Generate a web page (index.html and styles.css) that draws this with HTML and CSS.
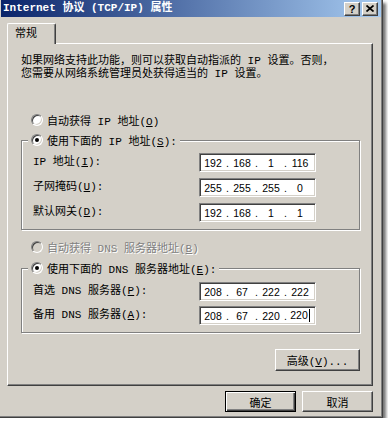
FILE: index.html
```html
<!DOCTYPE html>
<html lang="zh-CN">
<head>
<meta charset="utf-8">
<title>Internet 协议 (TCP/IP) 属性</title>
<link rel="stylesheet" href="styles.css">
</head>
<body>
<div class="dialog">
  <div class="titlebar">
    <span class="title">Internet 协议 (TCP/IP) 属性</span>
    <div class="tbtns">
      <span class="tbtn help">?</span>
      <span class="tbtn close"><svg width="8" height="7" viewBox="0 0 8 7"><path d="M0.5 0.5L7.5 6.5M7.5 0.5L0.5 6.5" stroke="#000" stroke-width="1.7" fill="none"/></svg></span>
    </div>
  </div>
  <div class="tabs"><div class="tab">常规</div></div>
  <div class="panel">
    <p class="intro">如果网络支持此功能，则可以获取自动指派的 IP 设置。否则，<br>您需要从网络系统管理员处获得适当的 IP 设置。</p>
    <div class="opt opt-first"><span class="radio"></span><span>自动获得 IP 地址(<u>O</u>)</span></div>
    <div class="group group-ip">
      <div class="opt legend"><span class="radio on"></span><span>使用下面的 IP 地址(<u>S</u>):</span></div>
      <div class="fields">
        <label>IP 地址(<u>I</u>):</label>
        <div class="ip"><span>192</span><i>.</i><span>168</span><i>.</i><span>1</span><i>.</i><span>116</span></div>
        <label>子网掩码(<u>U</u>):</label>
        <div class="ip"><span>255</span><i>.</i><span>255</span><i>.</i><span>255</span><i>.</i><span>0</span></div>
        <label>默认网关(<u>D</u>):</label>
        <div class="ip"><span>192</span><i>.</i><span>168</span><i>.</i><span>1</span><i>.</i><span>1</span></div>
      </div>
    </div>
    <div class="opt opt-dis"><span class="radio dis"></span><span>自动获得 DNS 服务器地址(<u>B</u>)</span></div>
    <div class="group group-dns">
      <div class="opt legend"><span class="radio on"></span><span>使用下面的 DNS 服务器地址(<u>E</u>):</span></div>
      <div class="fields fields-dns">
        <label>首选 DNS 服务器(<u>P</u>):</label>
        <div class="ip"><span>208</span><i>.</i><span>67</span><i>.</i><span>222</span><i>.</i><span>222</span></div>
        <label>备用 DNS 服务器(<u>A</u>):</label>
        <div class="ip"><span>208</span><i>.</i><span>67</span><i>.</i><span>220</span><i>.</i><span>220<b class="caret"></b></span></div>
      </div>
    </div>
    <div class="adv-row"><button class="btn adv">高级(<u>V</u>)...</button></div>
  </div>
  <div class="footer">
    <button class="btn default">确定</button>
    <button class="btn">取消</button>
  </div>
</div>
</body>
</html>
```
FILE: styles.css
```css
* { box-sizing: border-box; margin: 0; padding: 0; }
body {
  background: #fff;
  font-family: "Liberation Mono", "Noto Sans CJK SC", monospace;
  font-size: 11px;
  color: #000;
}
.dialog {
  width: 383px;
  height: 418px;
  background: #d4d0c8;
  border-right: 1px solid #404040;
  border-bottom: 1px solid #404040;
  padding: 0 1px 0 1px;
  box-shadow: inset -1px -1px #808080, 3px 3px 3px rgba(0,0,0,.55);
  display: flex;
  flex-direction: column;
}
.titlebar {
  height: 17px;
  background: linear-gradient(to right, #0a246a, #a6caf0);
  color: #fff;
  font-weight: bold;
  display: flex;
  align-items: center;
  justify-content: space-between;
  padding-left: 2px;
  flex: none;
}
.title { line-height: 17px; white-space: nowrap; }
.tbtns { display: flex; gap: 2px; margin-right: 3px; }
.tbtn {
  width: 16px;
  height: 14px;
  background: #d4d0c8;
  border: 1px solid;
  border-color: #fff #404040 #404040 #fff;
  box-shadow: inset -1px -1px #808080;
  display: flex;
  align-items: center;
  justify-content: center;
  color: #000;
}
.help { font-family: "Liberation Sans", sans-serif; font-size: 11px; font-weight: bold; line-height: 12px; }
.tabs { margin: 6px 0 0 6px; display: flex; flex: none; }
.tab {
  width: 49px;
  height: 21px;
  border: 1px solid;
  border-color: #fff #404040 transparent #fff;
  border-bottom: none;
  border-radius: 2px 2px 0 0;
  box-shadow: inset -1px 0 #808080;
  background: #d4d0c8;
  position: relative;
  z-index: 1;
  margin-bottom: -1px;
  padding: 4px 0 0 7px;
  line-height: 13px;
  font-weight: normal;
}
.panel {
  margin-left: 6px;
  width: 366px;
  height: 343px;
  flex: none;
  border: 1px solid;
  border-color: #fff #404040 #404040 #fff;
  box-shadow: inset -1px -1px #808080;
  padding: 0 12px 0 13px;
}
.intro { margin-top: 11px; line-height: 13px; white-space: nowrap; }
.opt { display: flex; align-items: center; height: 16px; gap: 4px; white-space: nowrap; }
.opt-first { margin-top: 31px; margin-left: 10px; }
.opt-dis { margin-top: 9px; margin-left: 10px; color: #808080; text-shadow: 1px 1px #fff; }
.radio {
  width: 12px;
  height: 12px;
  flex: none;
  border-radius: 50%;
  border: 1px solid;
  border-color: #808080 #fff #fff #808080;
  background: #fff;
  box-shadow: inset 1px 1px #404040, inset -1px -1px #d4d0c8;
  display: flex;
  align-items: center;
  justify-content: center;
}
.radio.on::after { content: ""; width: 4px; height: 4px; border-radius: 50%; background: #000; }
.radio.dis { background: #d4d0c8; }
.group {
  border: 1px solid #808080;
  box-shadow: inset 1px 1px #fff, 1px 1px #fff;
  padding: 0 0 7px 11px;
}
.group-ip { margin-top: 12px; }
.group-dns { margin-top: 13px; }
.legend {
  margin-top: -9px;
  margin-left: -5px;
  padding: 0 3px;
  background: #d4d0c8;
  width: fit-content;
}
.fields {
  display: grid;
  grid-template-columns: 166px 117px;
  row-gap: 6px;
  margin-top: 5px;
  align-items: center;
}
.fields-dns { row-gap: 5px; margin-top: 6px; }
label { white-space: nowrap; line-height: 13px; }
.ip {
  height: 19px;
  border: 1px solid;
  border-color: #808080 #fff #fff #808080;
  box-shadow: inset 1px 1px #404040, inset -1px -1px #d4d0c8;
  background: #fff;
  display: flex;
  align-items: center;
  padding-left: 1px;
  font-family: "Liberation Sans", Arial, sans-serif;
  font-size: 10.5px;
}
.ip span { width: 24px; text-align: center; white-space: nowrap; }
.ip i { font-style: normal; width: 5px; text-align: center; }
.caret { display: inline-block; width: 1px; height: 13px; background: #000; vertical-align: middle; margin-left: 1px; }
.adv-row { display: flex; justify-content: flex-end; margin-top: 16px; }
.btn {
  font-family: inherit;
  font-size: 11px;
  color: #000;
  background: #d4d0c8;
  border: 1px solid;
  border-color: #fff #404040 #404040 #fff;
  box-shadow: inset -1px -1px #808080;
  height: 21px;
  width: 71px;
}
.btn.adv { width: 85px; height: 22px; }
.btn.default {
  border: 1px solid #000;
  box-shadow: inset 1px 1px #fff, inset -1px -1px #404040, inset -2px -2px #808080;
}
.footer { display: flex; justify-content: flex-end; gap: 6px; margin-top: 5px; padding-right: 8px; }
```
